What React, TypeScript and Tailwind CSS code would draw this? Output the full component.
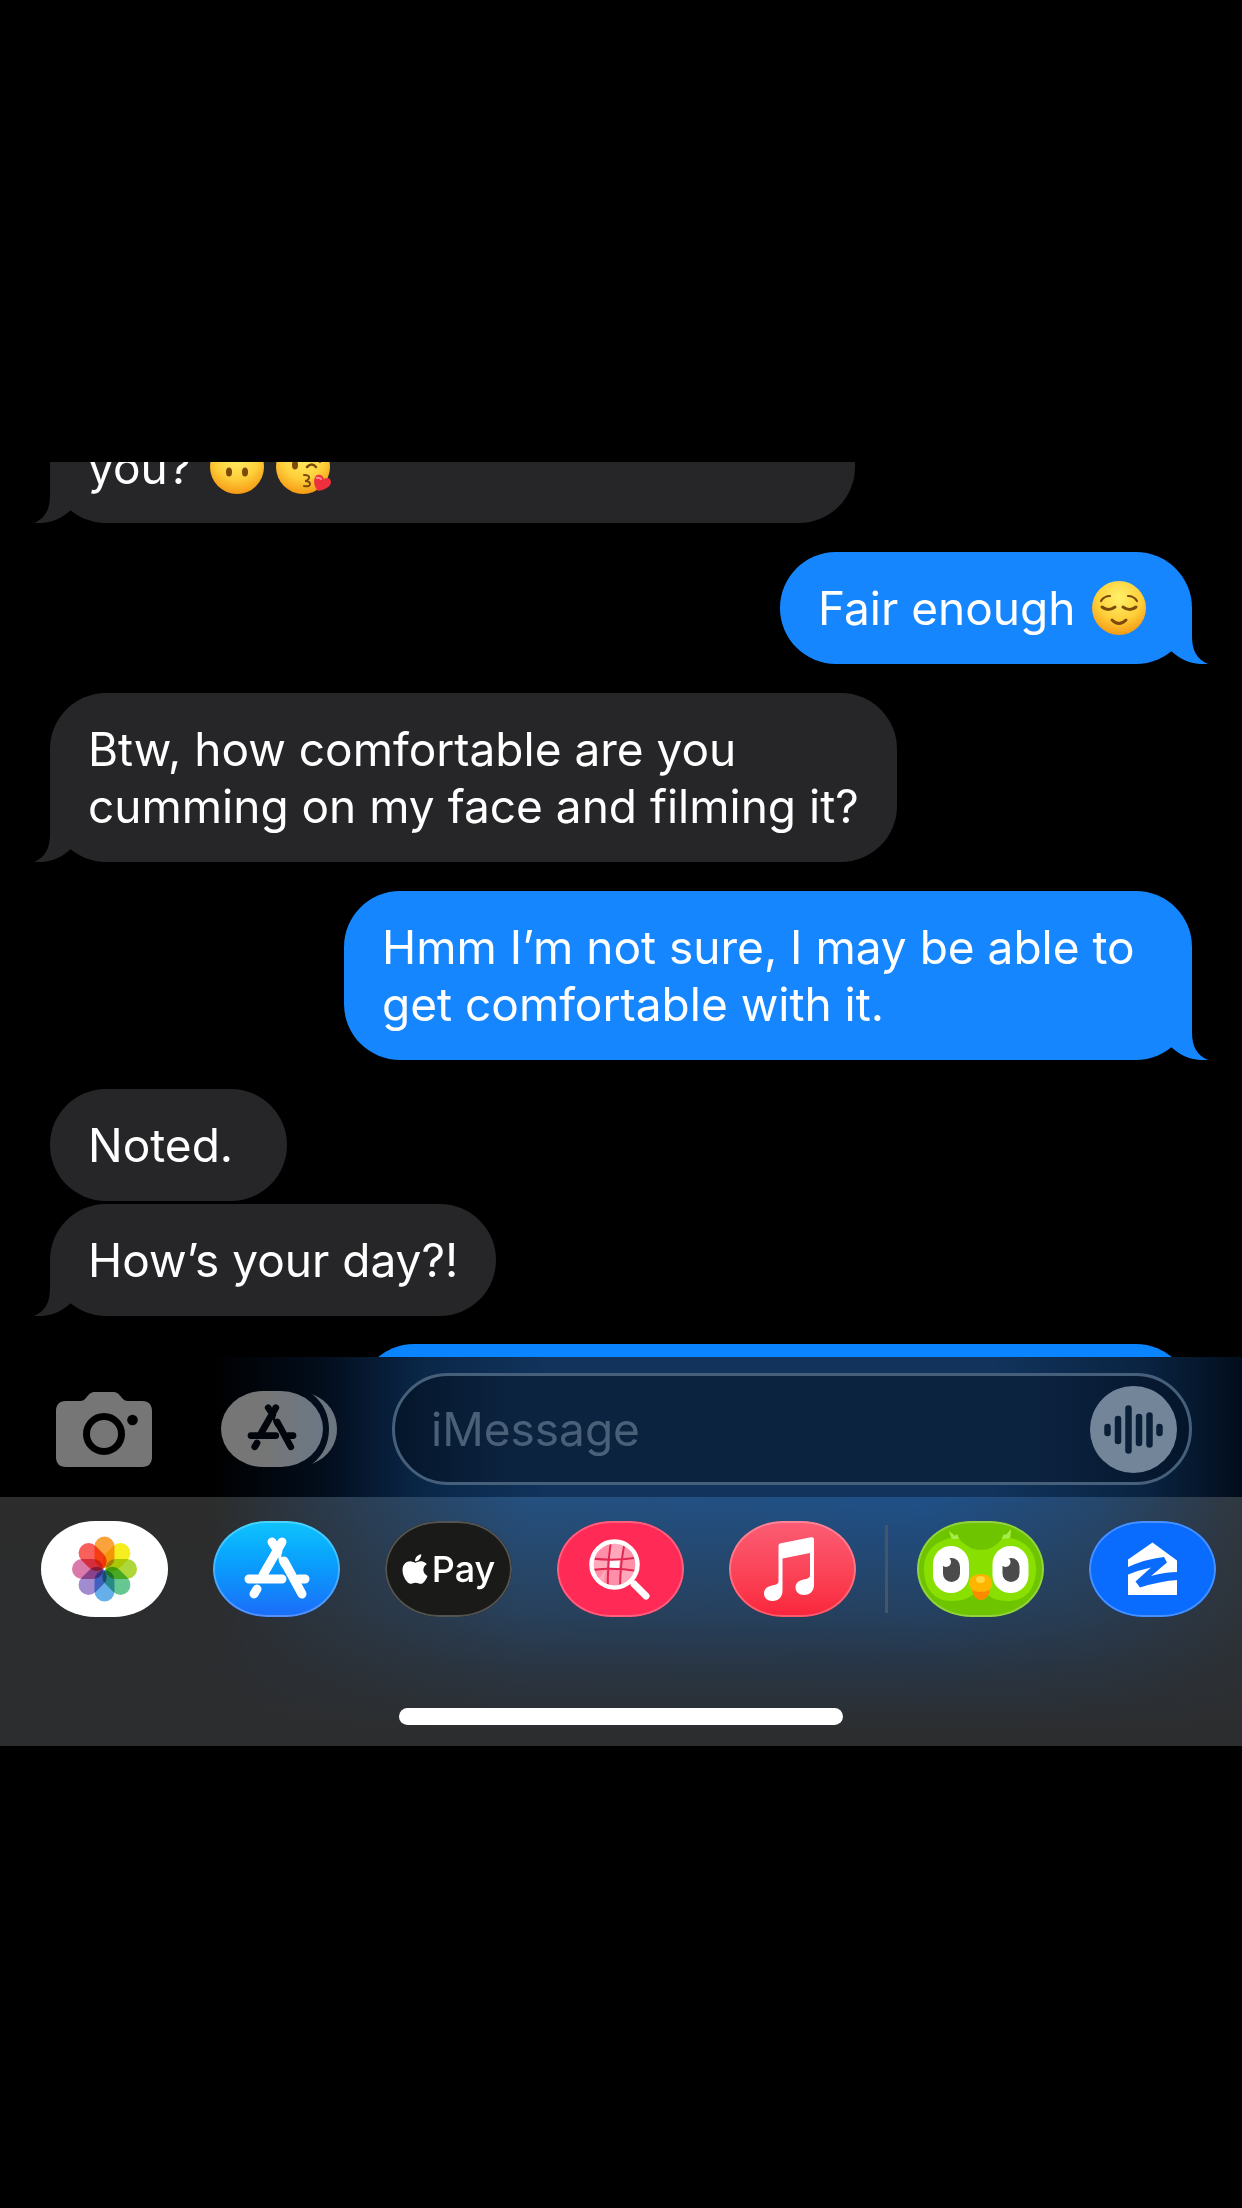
import React, { useState } from 'react';
import { FaApple } from 'react-icons/fa';

type Message = {
  id: number;
  mine?: boolean;
  tail?: boolean;
  className?: string;
  body: React.ReactNode;
};

// Shared yellow face for the emoji
const Face = ({ id, label, children }: { id: string; label: string; children: React.ReactNode }) => (
  <svg role="img" aria-label={label} viewBox="0 0 54 54" className="inline h-[54px] w-[54px] overflow-visible align-[-10px]">
    <defs>
      <radialGradient id={id} cx="50%" cy="30%" r="70%">
        <stop offset="0" stopColor="#fff06a" />
        <stop offset="0.6" stopColor="#ffcf3a" />
        <stop offset="1" stopColor="#f59a14" />
      </radialGradient>
    </defs>
    <circle cx="27" cy="27" r="27" fill={`url(#${id})`} />
    {children}
  </svg>
);

const UpsideDown = () => (
  <Face id="face-upside" label="upside-down face">
    <ellipse cx="19" cy="32" rx="3" ry="4.5" fill="#7a4a0a" />
    <ellipse cx="35" cy="32" rx="3" ry="4.5" fill="#7a4a0a" />
    <path d="M12 19Q27 2 42 19" fill="none" stroke="#7a4a0a" strokeWidth="3" strokeLinecap="round" />
  </Face>
);

const Kiss = () => (
  <Face id="face-kiss" label="face blowing a kiss">
    <ellipse cx="19" cy="25" rx="3" ry="4.5" fill="#7a4a0a" />
    <path d="M31 27q5-5 9 0" fill="none" stroke="#7a4a0a" strokeWidth="2.5" strokeLinecap="round" />
    <path d="M38 18q4 0 6 4" fill="none" stroke="#7a4a0a" strokeWidth="2" strokeLinecap="round" />
    <path d="M28 35q6 0 5 3t-4 3q5 0 5 3t-6 2" fill="none" stroke="#7a4a0a" strokeWidth="2" strokeLinecap="round" />
    <path d="M42 51c-5-6-5-13-1-16 4-1 6 1 7 4 3-2 7-1 7 3 0 5-7 8-13 9z" fill="#ee2f3d" />
    <path d="M41 38q2-1 4 1" fill="none" stroke="#ff8d92" strokeWidth="2" strokeLinecap="round" />
  </Face>
);

const Relieved = () => (
  <Face id="face-relieved" label="relieved face">
    <g fill="none" stroke="#7a4a0a" strokeLinecap="round">
      <path d="M9 20q3-5 9-5M36 15q6 0 9 5" strokeWidth="2.2" />
      <path d="M10 26q6 5 13 0M31 26q7 5 13 0" strokeWidth="3" />
      <path d="M20 39q7 7 14 0" strokeWidth="3" />
    </g>
  </Face>
);

const messages: Message[] = [
  {
    id: 1,
    tail: true,
    className: '-mt-[51px] min-w-[805px] rounded-t-none',
    body: <>you? <span className="inline-block w-1.5" /><UpsideDown /><span className="inline-block w-3" /><Kiss /></>,
  },
  {
    id: 2,
    mine: true,
    tail: true,
    className: 'mt-[29px] min-w-[412px]',
    body: <>Fair enough <span className="inline-block w-1" /><Relieved /></>,
  },
  { id: 3, tail: true, className: 'mt-[29px]', body: <>Btw, how comfortable are you<br />cumming on my face and filming it?</> },
  {
    id: 4,
    mine: true,
    tail: true,
    className: 'mt-[29px] min-w-[848px]',
    body: <>Hmm I’m not sure, I may be able to<br />get comfortable with it.</>,
  },
  { id: 5, className: 'mt-[29px] min-w-[237px]', body: 'Noted.' },
  { id: 6, tail: true, className: 'mt-[3px]', body: 'How’s your day?!' },
];

const Bubble = ({ mine, tail, className, body }: Message) => (
  <li
    className={`relative rounded-[56px] px-[38px] pt-7 pb-[27px] text-[46px] leading-[57px] text-white ${
      mine ? 'self-end bg-[#1686ff]' : 'self-start bg-[#262628]'
    } ${className}`}
  >
    {body}
    {tail && (
      <svg
        aria-hidden="true"
        viewBox="0 0 40 56"
        className={`absolute bottom-0 h-14 w-10 ${
          mine ? '-right-4 -scale-x-100 fill-[#1686ff]' : '-left-4 fill-[#262628]'
        }`}
      >
        <path d="M16 0v28C16 43 11 51 0 56c14 1 26-3 37-13l3-15V0z" />
      </svg>
    )}
  </li>
);

const StoreGlyph = () => (
  <g fill="none" stroke="currentColor" strokeWidth="9" strokeLinecap="round">
    <path d="M69 21L50 54M59 21l6 9" />
    <path d="M36 58h33M86 58h6" />
    <path d="M71 40l18 33" />
    <path d="M44 68l-3 5" />
    <path d="M67 33q-1 7 3 12" strokeWidth="3" />
  </g>
);

const CameraIcon = () => (
  <svg viewBox="0 0 96 75" className="h-[75px] w-24">
    <path
      fill="#767676"
      d="M10 9h14c3 0 4-1 6-3 3-4 5-6 9-6h18c4 0 6 2 9 6 2 2 3 3 6 3h14c7 0 10 4 10 10v46c0 6-3 10-10 10H10C3 75 0 71 0 65V19C0 13 3 9 10 9z"
    />
    <circle cx="48" cy="42" r="17.5" fill="none" stroke="#000" strokeWidth="7" />
    <circle cx="76.5" cy="28" r="5.3" fill="#000" />
  </svg>
);

const DrawerIcon = () => (
  <svg viewBox="0 0 116 76" className="h-[76px] w-[116px] text-[#02060c]">
    <defs>
      <linearGradient id="drawer">
        <stop offset="0.4" stopColor="#767676" />
        <stop offset="1" stopColor="#6b7885" />
      </linearGradient>
    </defs>
    <rect width="102" height="76" rx="42" ry="38" fill="url(#drawer)" />
    <path fill="#6c7681" d="M91 3c17 7 25 20 25 35s-8 28-25 35c12-9 17-22 17-35S103 12 91 3z" />
    <g transform="translate(3 1) scale(.75)">
      <StoreGlyph />
    </g>
  </svg>
);

const WaveIcon = () => (
  <svg viewBox="0 0 87 87" className="h-[87px] w-[87px]">
    <circle cx="43.5" cy="43.5" r="43.5" fill="#738599" />
    <path
      d="M17.5 41v6M28 33v22M38.5 22.5v42M49 31v26M59.5 29.5v29M69.5 41v6"
      stroke="#0a2038"
      strokeWidth="6.5"
      strokeLinecap="round"
    />
  </svg>
);

const petals = ['#fba23a', '#f7ee1f', '#aed73c', '#66c793', '#65b0ea', '#a18cd0', '#d97aab', '#f9605c'];

const PhotosIcon = () => (
  <svg viewBox="0 0 127 96" className="h-full w-full">
    {petals.map((color, i) => (
      <rect
        key={color}
        x="-10"
        y="-32.5"
        width="20"
        height="31.5"
        rx="10"
        fill={color}
        className="mix-blend-multiply"
        transform={`translate(63.5 48) rotate(${i * 45})`}
      />
    ))}
  </svg>
);

const StoreIcon = () => (
  <svg viewBox="0 0 127 96" className="h-full w-full text-white">
    <StoreGlyph />
  </svg>
);

const ImagesIcon = () => (
  <svg viewBox="0 0 127 96" className="h-full w-full">
    <clipPath id="globe">
      <circle cx="57.5" cy="43.5" r="21" />
    </clipPath>
    <g clipPath="url(#globe)">
      <path fill="#ff8fa8" d="M36 22h43v43H36z" />
      <path fill="#ffb9c8" d="M54 22h14l-3 16H52zM36 38h15l-2 10H36zM64 48h15l-6 17H62zM49 48l-3 17H36z" opacity=".6" />
      <path fill="#fff" d="M53 38h10l-1 10h-10z" />
      <path d="M35 37.5q22 3 45-1M35 49q22-3 45 1M54 20q-4 24-3 48M68 20q-5 24-5 48" fill="none" stroke="#e3264f" strokeWidth="2" />
    </g>
    <circle cx="57.5" cy="43.5" r="23" fill="none" stroke="#fff" strokeWidth="4.5" />
    <path d="M75 61l3 3" stroke="#fff" strokeWidth="4" />
    <path d="M77 63l12 12" stroke="#fff" strokeWidth="7" strokeLinecap="round" />
  </svg>
);

const MusicIcon = () => (
  <svg viewBox="0 0 127 96" className="h-full w-full fill-white">
    <path d="M49.5 25c0-1.500 1-2.500 2.500-2.700l30-6c2-.4 3 .5 3 2V64c0 6-4 10-10 10-5 0-8.500-3-8.500-7.500 0-5 4-7.500 9-8.300 4-.7 5.500-1.500 5.500-4.200V32l-27.500 5.500V70c0 6-4 10-10 10-5 0-8.500-3-8.500-7.500 0-5 4-7.500 9-8.300 4-.7 5.500-1.500 5.500-4.200z" />
  </svg>
);

const OwlIcon = () => (
  <svg viewBox="0 0 127 96" className="h-full w-full">
    <path
      fill="#89e000"
      d="M32 10l6 5 2-2 3 6c7 7 14 10 21 10s14-3 20-10l2-5 3 1 5-7-1 9c16 3 26 14 26 31 0 19-10 32-27 32-12 0-18-3-24-8H58c-6 5-12 8-24 8C17 80 7 67 7 48c0-17 10-27 27-31z"
    />
    <path fill="#a9ec4d" d="M32 10l6 5 2-2 2 5h-7zM94 8l-1 9-8 1 2-5 2 1z" />
    <rect x="16" y="25" width="36" height="47" rx="18" fill="#fff" />
    <rect x="75.5" y="25" width="36" height="47" rx="18" fill="#fff" />
    <rect x="26" y="37" width="17" height="24" rx="8.5" fill="#4b4b4b" />
    <rect x="85.5" y="37" width="17" height="24" rx="8.5" fill="#4b4b4b" />
    <circle cx="29" cy="41" r="5" fill="#fff" />
    <circle cx="88.5" cy="41" r="5" fill="#fff" />
    <path fill="#ff8a00" d="M55 66h18c0 8-4 13-9 13s-9-5-9-13z" />
    <path fill="#ffb400" d="M64 53c7 0 11 4 11 10 0 5-5 8-11 8s-12-3-12-8c0-6 5-10 12-10z" />
    <ellipse cx="63.5" cy="58.5" rx="4.5" ry="3.5" fill="#ffd83d" />
  </svg>
);

const HouseIcon = () => (
  <svg viewBox="0 0 127 96" className="h-full w-full">
    <path fill="#fff" d="M63.5 21.500L88 39.500V74H39V38.500z" />
    <path fill="#0a6bff" d="M38 46.500Q56 38 75 36l3 5.500L62 55q14-4 27-4v8q-18 1-38 7.500l-4.500-6L62 46.500Q50 49 38 54z" />
  </svg>
);

const apps = [
  { name: 'Photos', style: 'bg-white', icon: <PhotosIcon /> },
  { name: 'App Store', style: 'bg-linear-to-b from-[#12c4fd] to-[#1c6bf8]', icon: <StoreIcon /> },
  {
    name: 'Apple Pay',
    style: 'bg-[#1a1a18] text-white',
    icon: (
      <span className="flex h-full items-center justify-center gap-1 text-[36px] font-medium">
        <FaApple className="h-[34px] w-[26px]" />
        Pay
      </span>
    ),
  },
  { name: '#images', style: 'bg-[#ff2a55]', icon: <ImagesIcon /> },
  { name: 'Music', style: 'bg-linear-to-b from-[#fb5c74] to-[#fa233b]', icon: <MusicIcon /> },
  { name: 'Duolingo', style: 'bg-[#6fc400]', icon: <OwlIcon /> },
  { name: 'Zillow', style: 'bg-[#0a6bff]', icon: <HouseIcon /> },
];

const App = () => {
  const [text, setText] = useState('');

  return (
    <main className="min-h-screen bg-black py-[462px] font-['Inter','Liberation_Sans',sans-serif]">
      <ul className="flex flex-col overflow-hidden px-[50px]">
        {messages.map((message) => (
          <Bubble key={message.id} {...message} />
        ))}
        {/* next message, mostly hidden behind the input bar */}
        <li className="mt-7 h-[13px] w-[834px] self-end overflow-hidden">
          <div className="h-28 rounded-[56px] bg-[#0a84ff]" />
        </li>
      </ul>

      <form
        onSubmit={(e) => e.preventDefault()}
        className="flex items-center bg-[linear-gradient(to_right,#000_17%,#030d1c_26%,#0a2748_34%,#11335c_44%,#11335c_80%,#0a2442_92%,#020d1c_100%)] pt-4 pr-[50px] pb-3 pl-14"
      >
        <button type="button" aria-label="Camera">
          <CameraIcon />
        </button>
        <button type="button" aria-label="Apps" className="ml-[69px]">
          <DrawerIcon />
        </button>
        <div className="ml-[55px] flex h-28 min-w-0 flex-1 items-center rounded-full border-3 border-[#465f7a] bg-[linear-gradient(to_right,#04162b,#0c2340_15%,#0c2340_80%,#04152b)] pr-3 pl-9">
          <input
            type="text"
            aria-label="iMessage"
            placeholder="iMessage"
            value={text}
            onChange={(e) => setText(e.target.value)}
            className="min-w-0 flex-1 bg-transparent text-[46px] leading-[57px] text-white outline-none placeholder:text-[#4a6079]"
          />
          <button type="button" aria-label="Record audio">
            <WaveIcon />
          </button>
        </div>
      </form>

      <footer className="bg-[#2c2c2c] bg-[linear-gradient(to_bottom,transparent,#2b2e3170_45%,#2b2d30c0_68%,#2c2d2e_95%),linear-gradient(to_right,#2c2c2c_17%,#2a4058_30%,#25507f_42%,#1f5088_75%,#25486f_88%,#30373f_100%)] pt-6 pb-[21px]">
        <nav className="flex gap-[45px] overflow-hidden pl-[41px]">
          {apps.map((app, i) => (
            <React.Fragment key={app.name}>
              {i === 5 && <span className="-mx-4 my-1 w-[3px] shrink-0 bg-[#45566a]" />}
              <button
                type="button"
                aria-label={app.name}
                className={`relative h-24 w-[127px] shrink-0 overflow-hidden rounded-[54px/48px] ${app.style}`}
              >
                {app.icon}
                <span className="absolute inset-0 rounded-[54px/48px] border-2 border-white/25" />
              </button>
            </React.Fragment>
          ))}
        </nav>
        <div className="mx-auto mt-[91px] h-[17px] w-[444px] rounded-full bg-white" />
      </footer>
    </main>
  );
};

export default App;
